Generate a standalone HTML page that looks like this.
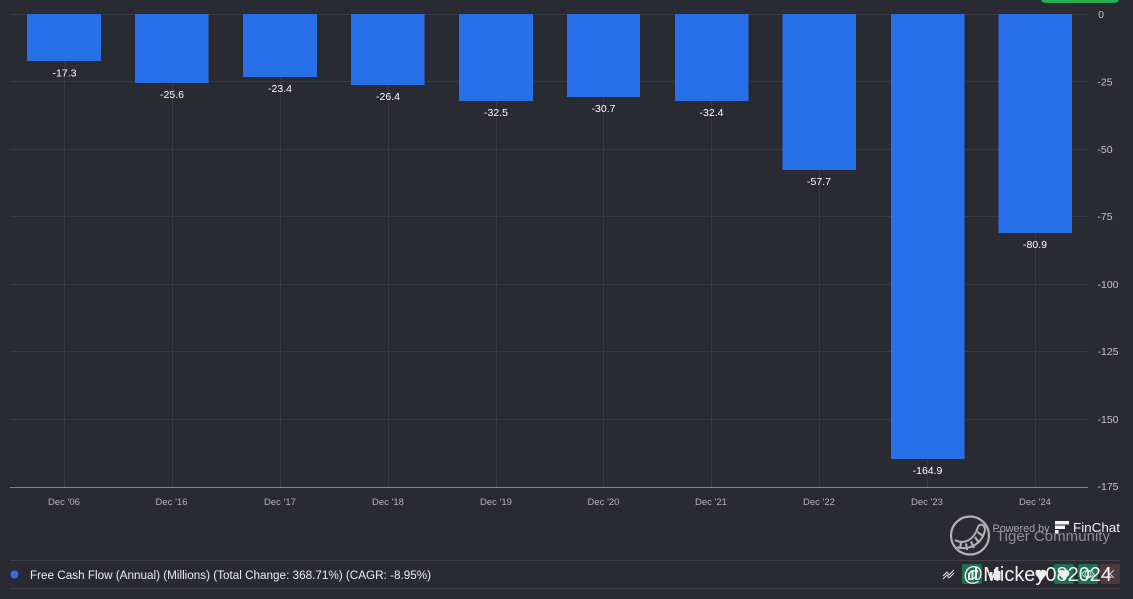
<!DOCTYPE html>
<html>
<head>
<meta charset="utf-8">
<style>
html,body{margin:0;padding:0;background:#2a2a32;width:1133px;height:599px;overflow:hidden}
svg{display:block}
text{font-family:"Liberation Sans",sans-serif}
</style>
</head>
<body>
<svg width="1133" height="599" viewBox="0 0 1133 599" xmlns="http://www.w3.org/2000/svg">
<rect width="1133" height="599" fill="#2a2a32"/>
<rect x="1040" y="-10" width="80" height="13" rx="6" fill="#27ae4f"/>

<g stroke="#393941" stroke-width="1">
<path d="M10 14.5H1088M10 81.500H1088M10 149.500H1088M10 216.500H1088M10 284.500H1088M10 351.500H1088M10 419.500H1088"/>
<path d="M64.500 14V487M172.500 14V487M280.500 14V487M388.500 14V487M496.500 14V487M603.500 14V487M711.500 14V487M819.500 14V487M927.500 14V487M1035.500 14V487"/>
</g>
<rect x="10" y="487" width="1078" height="1" fill="#85858c"/>

<g fill="#2870ea">
<rect x="27" y="14" width="74" height="47"/>
<rect x="135" y="14" width="73.500" height="69"/>
<rect x="243" y="14" width="74" height="63"/>
<rect x="351" y="14" width="73.500" height="71"/>
<rect x="459" y="14" width="74" height="87"/>
<rect x="567" y="14" width="73" height="83"/>
<rect x="675" y="14" width="73.500" height="87"/>
<rect x="782.500" y="14" width="73.500" height="156"/>
<rect x="891" y="14" width="73.500" height="445"/>
<rect x="998.500" y="14" width="73.500" height="219"/>
</g>

<g fill="#ffffff" font-size="10.500" text-anchor="middle">
<text x="64.500" y="76.500">-17.3</text>
<text x="172" y="98">-25.6</text>
<text x="280" y="92">-23.4</text>
<text x="388" y="100">-26.4</text>
<text x="496" y="116">-32.5</text>
<text x="603.500" y="112">-30.7</text>
<text x="711.500" y="116">-32.4</text>
<text x="819" y="185">-57.7</text>
<text x="927.500" y="474">-164.9</text>
<text x="1035" y="248">-80.9</text>
</g>

<g fill="#c4c4c8" font-size="10.500" text-anchor="middle">
<text x="1101" y="18">0</text>
<text x="1105" y="85.500">-25</text>
<text x="1105" y="153">-50</text>
<text x="1105" y="220">-75</text>
<text x="1108" y="288">-100</text>
<text x="1108" y="355">-125</text>
<text x="1108" y="423">-150</text>
<text x="1108" y="490">-175</text>
</g>

<g fill="#b4b4b8" font-size="9.500" text-anchor="middle">
<text x="64" y="505">Dec '06</text>
<text x="171.500" y="505">Dec '16</text>
<text x="280" y="505">Dec '17</text>
<text x="388" y="505">Dec '18</text>
<text x="496" y="505">Dec '19</text>
<text x="603.500" y="505">Dec '20</text>
<text x="711" y="505">Dec '21</text>
<text x="819" y="505">Dec '22</text>
<text x="927" y="505">Dec '23</text>
<text x="1035" y="505">Dec '24</text>
</g>

<rect x="10" y="560" width="1110" height="1" fill="#404048"/>
<rect x="10" y="588" width="1110" height="1" fill="#404048"/>
<circle cx="14.500" cy="574.500" r="4" fill="#2870ea"/>
<text x="30" y="579" fill="#ecedf0" font-size="12.300" textLength="401" lengthAdjust="spacingAndGlyphs">Free Cash Flow (Annual) (Millions) (Total Change: 368.71%) (CAGR: -8.95%)</text>

<!-- Tiger logo -->
<g fill="none" stroke="#b2b2b4">
<circle cx="970" cy="535.500" r="19" stroke-width="2.200"/>
<path d="M955 540C964 545 974 540 978 527" stroke-width="2"/>
<path d="M957 547C969 551 982 544 985 530C985 524 979 523 978 527" stroke-width="2"/>
<path d="M961 543L960 549M966 543.500L967 550M971 541.500L974 548M975 537L979 543M977.500 532L983 536" stroke-width="2.200"/>
</g>

<text x="992.500" y="532" fill="#a6a6aa" font-size="10.800" textLength="57" lengthAdjust="spacingAndGlyphs">Powered by</text>
<g fill="#f3f3f3">
<rect x="1055" y="521" width="14" height="3.500"/>
<rect x="1055" y="525.500" width="10" height="3.500"/>
<rect x="1055" y="530" width="3.500" height="3.500"/>
</g>
<text x="1073" y="532" fill="#f0f0f0" font-size="13" textLength="47" lengthAdjust="spacingAndGlyphs">FinChat</text>
<text x="996" y="541" fill="#8f8f93" font-size="15" textLength="114" lengthAdjust="spacingAndGlyphs">Tiger Community</text>

<!-- toolbar -->
<path d="M943 576L947 572L949 575L954 570M943 579L947 575L949 578L954 573" fill="none" stroke="#e8e8e8" stroke-width="1"/>
<rect x="962" y="564" width="20" height="20" rx="2" fill="#1c6f54"/>
<rect x="968" y="573" width="2" height="7" fill="#e8f0ec"/>
<rect x="971.500" y="570" width="2" height="10" fill="#e8f0ec"/>
<rect x="975" y="567" width="2" height="13" fill="#e8f0ec"/>
<g fill="#e4e4e4">
<rect x="990" y="572" width="2.500" height="8"/>
<rect x="994" y="569" width="2.500" height="11"/>
<rect x="998" y="571" width="2.500" height="9"/>
</g>
<path d="M1041 581L1036 575C1034 571 1039 568 1041 571C1043 568 1048 571 1046 575Z" fill="#eeeeee"/>
<rect x="1054" y="564" width="20" height="20" rx="2" fill="#1c6f54"/>
<path d="M1064 580L1059 575C1057 571 1062 568 1064 571C1066 568 1071 571 1069 575Z" fill="#e8f0ec"/>
<rect x="1078" y="564" width="20" height="20" rx="2" fill="#1c6f54"/>
<path d="M1082 574C1085 569 1091 569 1094 574C1091 579 1085 579 1082 574Z" fill="none" stroke="#cfe0d8" stroke-width="1"/>
<circle cx="1088" cy="574" r="3" fill="none" stroke="#cfe0d8" stroke-width="1"/>
<rect x="1100" y="564" width="20" height="20" rx="2" fill="#4a3a3c"/>
<path d="M1106 570L1114 578M1114 570L1106 578" stroke="#c9bcbc" stroke-width="1.200"/>
<text x="963" y="581" fill="#f2f2f2" font-size="20.500" textLength="149" lengthAdjust="spacingAndGlyphs">@Mickey082024</text>
</svg>
</body>
</html>
